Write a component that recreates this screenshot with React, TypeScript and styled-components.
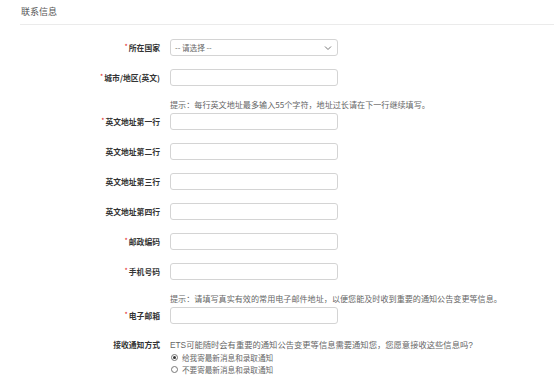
import React, { useState } from "react";
import styled, { createGlobalStyle } from "styled-components";

const GlobalStyle = createGlobalStyle`
  html, body {
    margin: 0;
    padding: 0;
    background: #fff;
  }
  body {
    font-family: "Liberation Sans", "Noto Sans CJK SC", sans-serif;
    color: #333;
  }
`;

type Field = {
  label: string;
  required?: boolean;
  hint?: string;
  select?: boolean;
};

const fields: Field[] = [
  { label: "所在国家", required: true, select: true },
  { label: "城市/地区(英文)", required: true },
  {
    label: "英文地址第一行",
    required: true,
    hint: "提示：每行英文地址最多输入55个字符，地址过长请在下一行继续填写。",
  },
  { label: "英文地址第二行" },
  { label: "英文地址第三行" },
  { label: "英文地址第四行" },
  { label: "邮政编码", required: true },
  { label: "手机号码", required: true },
  {
    label: "电子邮箱",
    required: true,
    hint: "提示：请填写真实有效的常用电子邮件地址，以便您能及时收到重要的通知公告变更等信息。",
  },
];

function App() {
  const [notify, setNotify] = useState<boolean>(true);

  return (
    <>
      <GlobalStyle />
      <Wrap>
        <Header>
          <Title>联系信息</Title>
        </Header>
        <Form>
          {fields.map((f) => (
            <Row key={f.label}>
              <Label>
                {f.required && <Star>*</Star>}
                {f.label}
              </Label>
              <FieldCol>
                {f.hint && <Hint>{f.hint}</Hint>}
                {f.select ? (
                  <SelectBox>
                    <span>-- 请选择 --</span>
                    <svg width="8" height="6" viewBox="0 0 8 6">
                      <path
                        d="M1 1.5 L4 4.5 L7 1.5"
                        fill="none"
                        stroke="#777"
                        strokeWidth="1"
                      />
                    </svg>
                  </SelectBox>
                ) : (
                  <TextInput />
                )}
              </FieldCol>
            </Row>
          ))}
          <NotifyRow>
            <NotifyLabel>接收通知方式</NotifyLabel>
            <FieldCol>
              <Question>
                ETS可能随时会有重要的通知公告变更等信息需要通知您，您愿意接收这些信息吗?
              </Question>
              <RadioLine onClick={() => setNotify(true)}>
                <Radio checked={notify} />
                给我寄最新消息和录取通知
              </RadioLine>
              <RadioLine onClick={() => setNotify(false)}>
                <Radio checked={!notify} />
                不要寄最新消息和录取通知
              </RadioLine>
            </FieldCol>
          </NotifyRow>
        </Form>
      </Wrap>
    </>
  );
}

const Wrap = styled.div`
  width: 554px;
  height: 392px;
  overflow: hidden;
  background: #fff;
`;

const Header = styled.div`
  margin-left: 20px;
  height: 24px;
  border-bottom: 1px solid #ebebeb;
  display: flex;
  align-items: center;
`;

const Title = styled.div`
  font-family: "Noto Sans CJK SC", sans-serif;
  font-size: 9px;
  color: #555;
  padding-left: 1px;
  padding-bottom: 2px;
`;

const Form = styled.div`
  display: flex;
  flex-direction: column;
  gap: 13px;
  padding-top: 14px;
`;

const Row = styled.div`
  display: grid;
  grid-template-columns: 160px 168px;
  column-gap: 10px;
`;

const Label = styled.div`
  align-self: end;
  height: 17px;
  display: flex;
  align-items: center;
  justify-content: flex-end;
  font-family: "Noto Sans CJK SC", sans-serif;
  font-size: 7.8px;
  font-weight: bold;
  color: #333;
  white-space: nowrap;
`;

const Star = styled.span`
  color: #e02020;
  font-size: 7px;
  font-weight: normal;
  align-self: flex-start;
  margin-top: 2px;
  margin-right: 1px;
`;

const FieldCol = styled.div`
  display: flex;
  flex-direction: column;
`;

const Hint = styled.div`
  font-family: "Noto Sans CJK SC", sans-serif;
  font-size: 8.1px;
  line-height: 12px;
  color: #666;
  white-space: nowrap;
  margin-bottom: 2px;
`;

const TextInput = styled.input`
  box-sizing: border-box;
  width: 168px;
  height: 17px;
  margin: 0;
  padding: 0 4px;
  border: 1px solid #d4d4d4;
  border-radius: 3px;
  background: #fff;
  outline: none;
`;

const SelectBox = styled.div`
  box-sizing: border-box;
  width: 168px;
  height: 17px;
  padding: 0 5px 0 4px;
  border: 1px solid #d4d4d4;
  border-radius: 3px;
  display: flex;
  align-items: center;
  justify-content: space-between;
  font-family: "Noto Sans CJK SC", sans-serif;
  font-size: 7.6px;
  color: #666;
`;

const NotifyRow = styled.div`
  display: grid;
  grid-template-columns: 160px 340px;
  column-gap: 10px;
  margin-top: 1px;
`;

const NotifyLabel = styled.div`
  text-align: right;
  font-family: "Noto Sans CJK SC", sans-serif;
  font-size: 7.8px;
  font-weight: bold;
  line-height: 14px;
  color: #333;
`;

const Question = styled.div`
  font-family: "Liberation Sans", "Noto Sans CJK SC", sans-serif;
  font-size: 8.3px;
  line-height: 14px;
  color: #666;
  white-space: nowrap;
`;

const RadioLine = styled.div`
  display: flex;
  align-items: center;
  gap: 4px;
  height: 11.5px;
  padding-left: 1px;
  font-family: "Noto Sans CJK SC", sans-serif;
  font-size: 7.6px;
  color: #666;
  cursor: pointer;
`;

const Radio = styled.span<{ checked: boolean }>`
  box-sizing: border-box;
  width: 7px;
  height: 7px;
  border-radius: 50%;
  border: 1px solid #777;
  display: inline-flex;
  align-items: center;
  justify-content: center;
  &::after {
    content: "";
    width: 3px;
    height: 3px;
    border-radius: 50%;
    background: ${(p) => (p.checked ? "#333" : "transparent")};
  }
`;

export default App;
